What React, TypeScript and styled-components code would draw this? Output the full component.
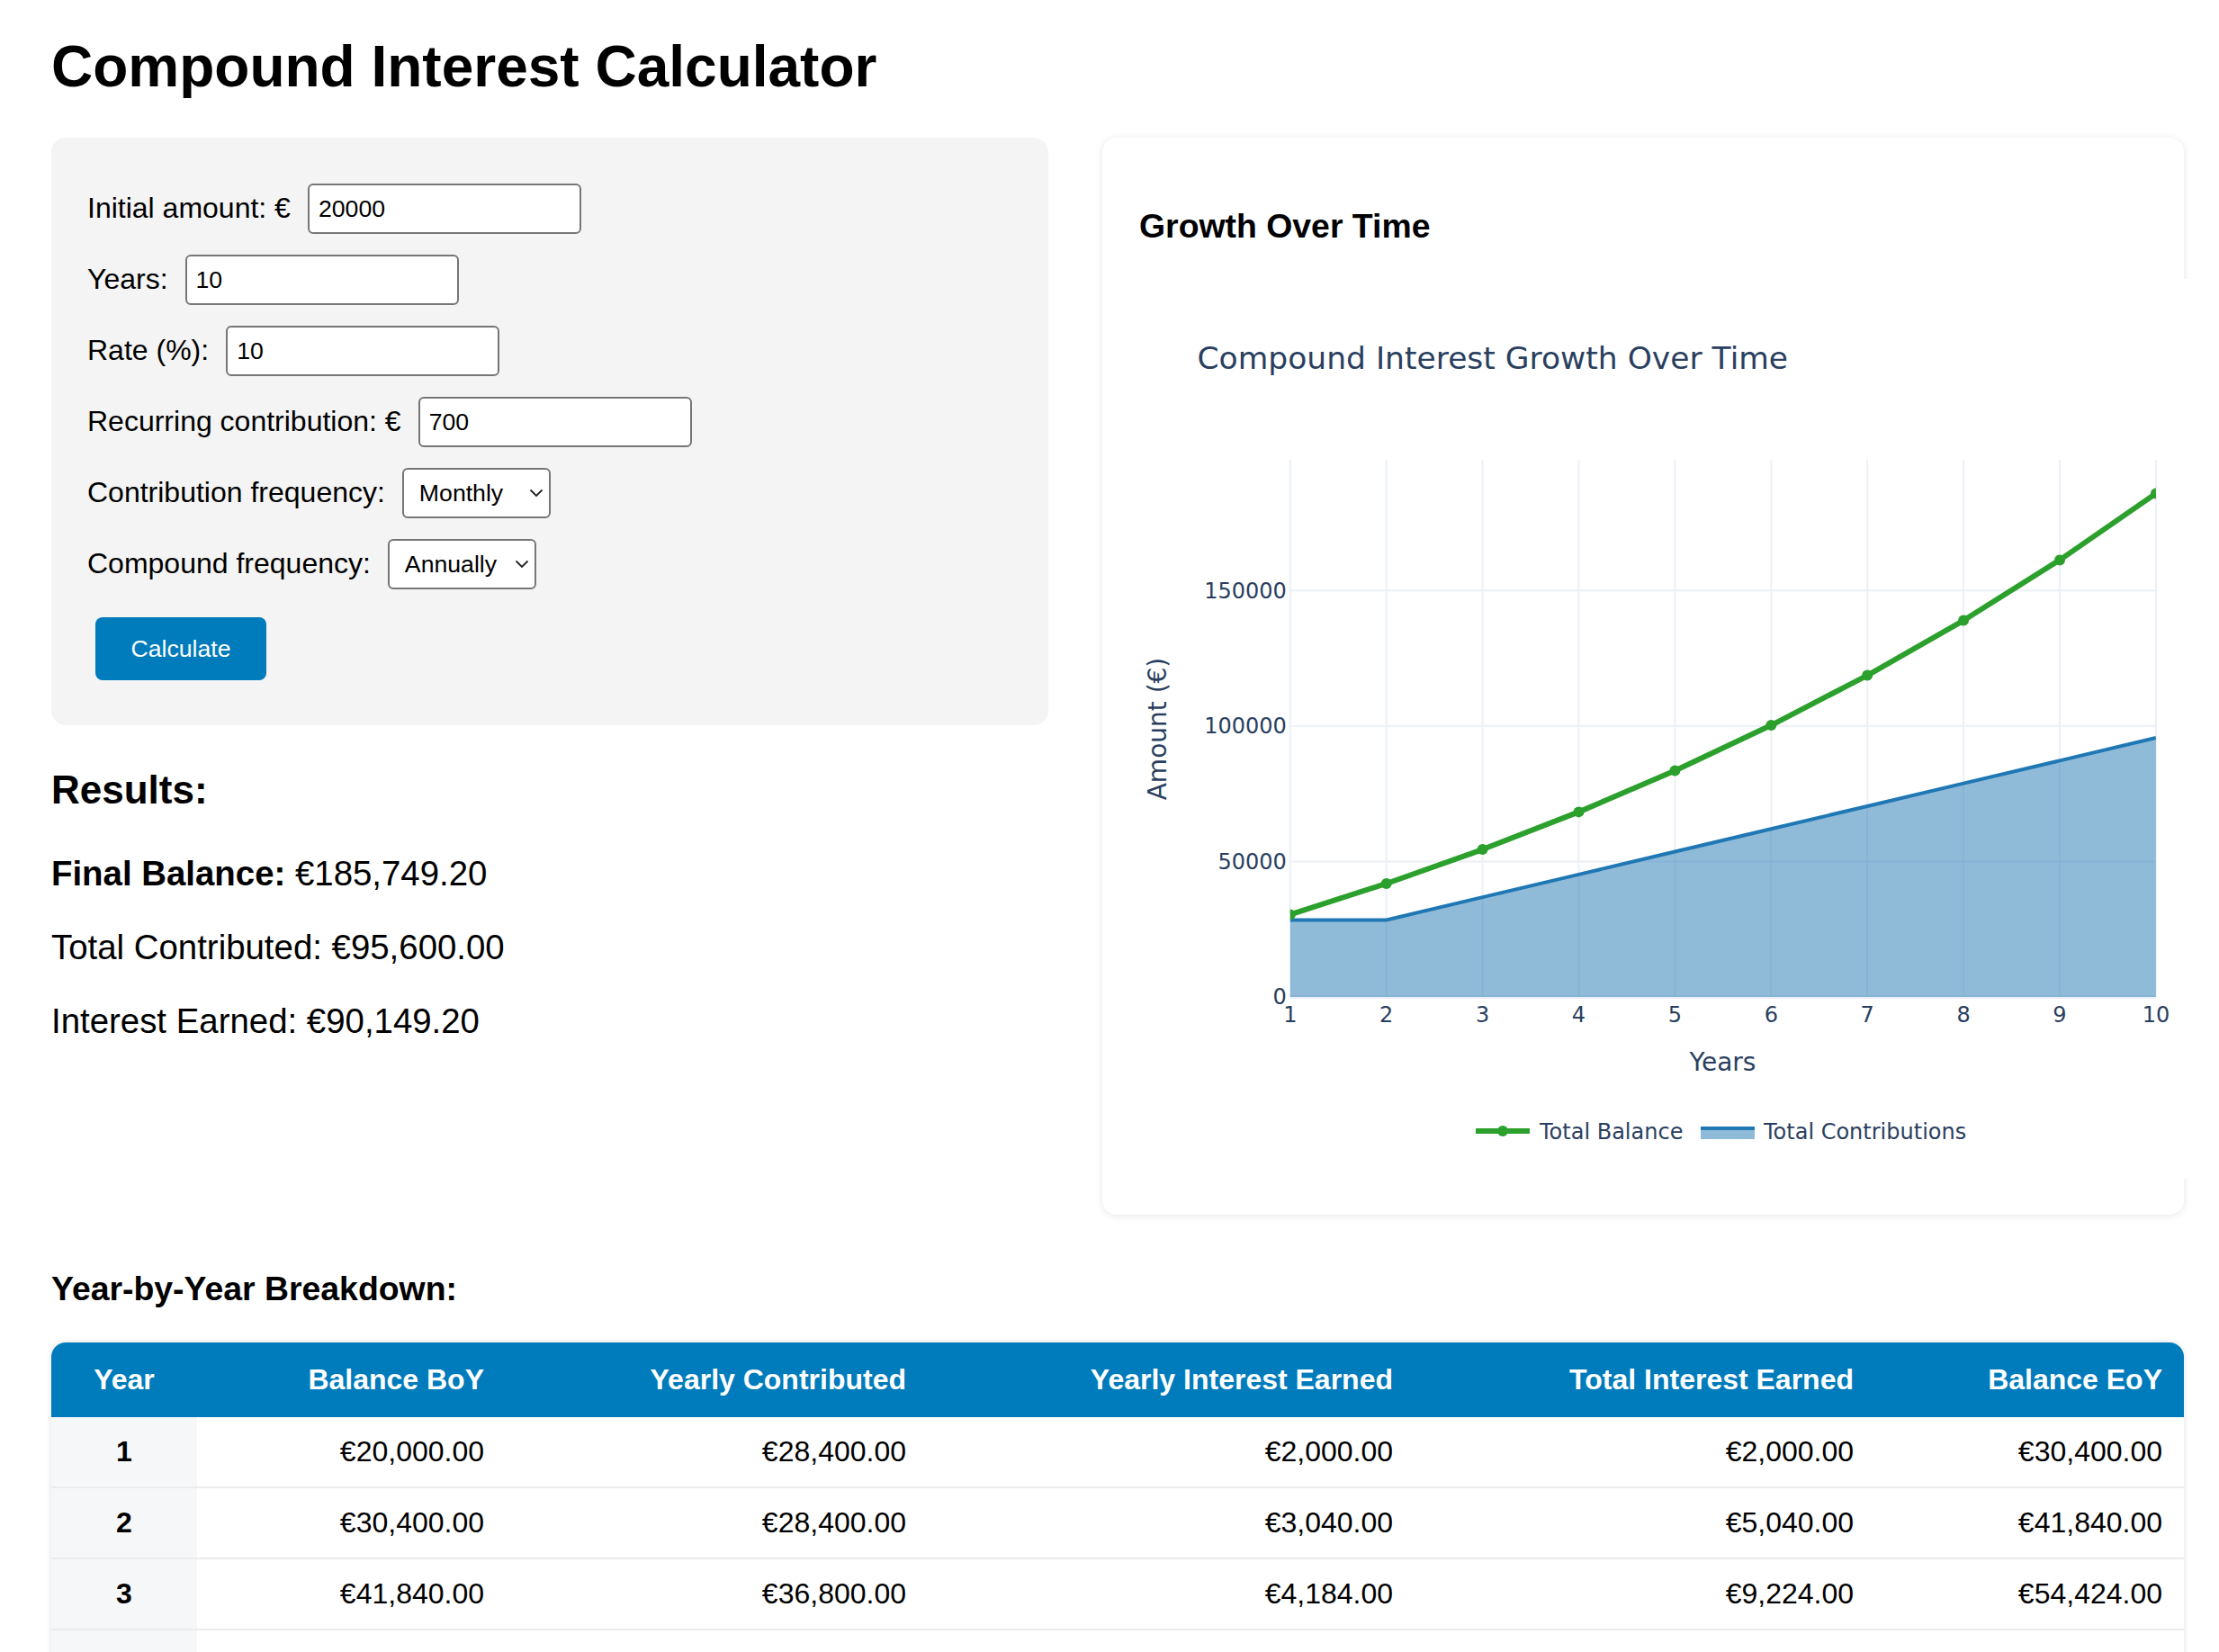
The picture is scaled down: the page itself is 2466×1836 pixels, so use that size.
import React from 'react';
import styled, { createGlobalStyle } from 'styled-components';

const GlobalStyle = createGlobalStyle`
  html { scrollbar-width: none; overflow-x: hidden; }
  html::-webkit-scrollbar { display: none; }
  * { box-sizing: border-box; }
  body {
    margin: 0;
    background: #fff;
    color: #000;
    font-family: "Liberation Sans", Arial, Helvetica, sans-serif;
    overflow-x: hidden;
  }
`;

const Page = styled.div`
  padding: 36px 0 60px 57px;
  width: 2427px;
`;

const Title = styled.h1`
  margin: 0 0 41px;
  font-size: 64px;
  line-height: 76px;
  font-weight: 700;
`;

const TopGrid = styled.div`
  display: grid;
  grid-template-columns: 1108px 1202px;
  column-gap: 60px;
  align-items: start;
`;

const LeftColumn = styled.div`
  display: flex;
  flex-direction: column;
`;

const FormPanel = styled.form`
  background: #f4f4f4;
  border-radius: 16px;
  padding: 51px 40px 50px;
  display: flex;
  flex-direction: column;
  gap: 23px;
`;

const FieldRow = styled.div`
  display: flex;
  align-items: center;
  gap: 19px;
  height: 56px;
`;

const FieldLabel = styled.label`
  font-size: 32px;
  line-height: 37px;
  white-space: nowrap;
  margin-top: -2px;
`;

const TextInput = styled.input`
  width: 304px;
  height: 56px;
  border: 2px solid #767676;
  border-radius: 6px;
  padding: 0 10px;
  font-family: inherit;
  font-size: 26.67px;
  color: #000;
  background: #fff;
  outline: none;
`;

const SelectWrap = styled.div`
  position: relative;
  width: 165px;
  height: 56px;
`;

const Select = styled.select`
  appearance: none;
  -webkit-appearance: none;
  width: 100%;
  height: 100%;
  border: 2px solid #767676;
  border-radius: 6px;
  padding: 0 0 0 17px;
  font-family: inherit;
  font-size: 26.67px;
  color: #000;
  background: #fff;
  outline: none;
`;

const Chevron = styled.svg`
  position: absolute;
  right: 8px;
  top: 50%;
  margin-top: -5px;
  width: 16px;
  height: 10px;
  pointer-events: none;
`;

const CalcButton = styled.button`
  align-self: flex-start;
  margin: 8px 0 0 9px;
  width: 190px;
  height: 70px;
  border: none;
  border-radius: 8px;
  background: #007bbb;
  color: #fff;
  font-family: inherit;
  font-size: 26.67px;
`;

const ResultsTitle = styled.h2`
  margin: 47px 0 0;
  font-size: 44px;
  line-height: 50px;
  font-weight: 700;
`;

const ResultList = styled.div`
  margin-top: 46px;
  display: flex;
  flex-direction: column;
  gap: 38px;
`;

const ResultLine = styled.p`
  margin: 0;
  font-size: 38.4px;
  line-height: 44px;
`;

const ChartCard = styled.section`
  background: #fff;
  border-radius: 16px;
  box-shadow: 0 1px 8px rgba(0, 0, 0, 0.1);
  padding: 40px 40px 40px 41px;
`;

const CardTitle = styled.h3`
  margin: 37px 0;
  font-size: 37.4px;
  line-height: 43px;
  font-weight: 700;
`;

const ChartFrame = styled.div`
  width: 1289px;
  height: 1000px;
  background: #fff;
`;

const ChartText = styled.text<{ $size: number }>`
  font-family: "DejaVu Sans", Verdana, sans-serif;
  fill: #2a3f5f;
  font-size: ${(p) => p.$size}px;
`;

const BreakdownTitle = styled.h3`
  margin: 61px 0 38px;
  font-size: 37.4px;
  line-height: 43px;
  font-weight: 700;
`;

const TableShell = styled.div`
  width: 2370px;
  border-radius: 16px;
  overflow: hidden;
  box-shadow: 0 0 6px rgba(0, 0, 0, 0.12);
`;

const Table = styled.table`
  width: 100%;
  border-collapse: separate;
  border-spacing: 0;
  table-layout: fixed;
  font-size: 32px;
`;

const HeadCell = styled.th<{ $center?: boolean }>`
  height: 83px;
  padding: 0 24px;
  background: #007bbb;
  color: #fff;
  font-weight: 700;
  text-align: ${(p) => (p.$center ? 'center' : 'right')};
  white-space: nowrap;
`;

const YearCell = styled.td`
  height: 79px;
  padding: 0;
  text-align: center;
  font-weight: 700;
  background: #f6f7f9;
  border-bottom: 2px solid #ececec;
`;

const ValueCell = styled.td`
  height: 79px;
  padding: 0 24px;
  text-align: right;
  border-bottom: 2px solid #ececec;
`;

/* ---------- data ---------- */

const contributions = [28400, 28400, 36800, 45200, 53600, 62000, 70400, 78800, 87200, 95600];

type Row = { year: number; boy: number; contributed: number; interest: number; totalInterest: number; eoy: number };

const buildRows = (): Row[] => {
  const rows: Row[] = [];
  let bal = 20000;
  let tot = 0;
  for (let i = 0; i < 10; i++) {
    const boy = bal;
    const interest = boy * 0.1;
    tot += interest;
    const eoy = boy + 8400 + interest;
    rows.push({ year: i + 1, boy, contributed: contributions[i], interest, totalInterest: tot, eoy });
    bal = eoy;
  }
  return rows;
};

const rows = buildRows();

const fmt = (v: number) =>
  '€' + v.toLocaleString('en-US', { minimumFractionDigits: 2, maximumFractionDigits: 2 });

/* ---------- chart ---------- */

const X0 = 167.8;
const DX = 106.9;
const Y0 = 798;
const TOP = 201;
const K = 150.6 / 50000;
const RIGHT = X0 + 9 * DX;

const xOf = (i: number) => X0 + i * DX;
const yOf = (v: number) => Y0 - v * K;

const GrowthChart: React.FC = () => {
  const balance = rows.map((r) => r.eoy);
  const balPts = balance.map((v, i) => `${xOf(i)},${yOf(v)}`).join(' ');
  const conPts = contributions.map((v, i) => `${xOf(i)},${yOf(v)}`).join(' ');
  const fillPath = `M${xOf(0)},${Y0} L${conPts.split(' ').join(' L')} L${xOf(9)},${Y0} Z`;
  const grid = '#ebf0f8';
  return (
    <svg width={1289} height={1000} viewBox="0 0 1289 1000">
      <defs>
        <clipPath id="plotClip">
          <rect x={X0} y={TOP} width={RIGHT - X0} height={Y0 - TOP} />
        </clipPath>
      </defs>
      <rect width={1289} height={1000} fill="#fff" />
      {contributions.map((_, i) => (
        <line key={'vx' + i} x1={xOf(i)} x2={xOf(i)} y1={TOP} y2={Y0} stroke={grid} strokeWidth={2} />
      ))}
      {[50000, 100000, 150000].map((v) => (
        <line key={'hy' + v} x1={X0} x2={RIGHT} y1={yOf(v)} y2={yOf(v)} stroke={grid} strokeWidth={2} />
      ))}
      <line x1={X0} x2={RIGHT} y1={Y0} y2={Y0} stroke={grid} strokeWidth={4} />
      <g clipPath="url(#plotClip)">
        <path d={fillPath} fill="rgba(31,119,180,0.5)" />
        <polyline points={conPts} fill="none" stroke="#1f77b4" strokeWidth={4} strokeLinejoin="round" />
        <polyline points={balPts} fill="none" stroke="#2ca02c" strokeWidth={6} strokeLinejoin="round" />
        {balance.map((v, i) => (
          <circle key={'m' + i} cx={xOf(i)} cy={yOf(v)} r={6} fill="#2ca02c" />
        ))}
      </g>
      {[0, 50000, 100000, 150000].map((v) => (
        <ChartText key={'yl' + v} $size={24} x={163.8} y={yOf(v) + 8.4} textAnchor="end">
          {v}
        </ChartText>
      ))}
      {contributions.map((_, i) => (
        <ChartText key={'xl' + i} $size={24} x={xOf(i)} y={825.5} textAnchor="middle">
          {i + 1}
        </ChartText>
      ))}
      <ChartText $size={34.5} x={64.5} y={100}>
        Compound Interest Growth Over Time
      </ChartText>
      <ChartText $size={28} x={648.5} y={880} textAnchor="middle">
        Years
      </ChartText>
      <ChartText $size={28} x={0} y={0} textAnchor="middle" transform="translate(29.5,500) rotate(-90)">
        Amount (€)
      </ChartText>
      <line x1={374} x2={434} y1={947} y2={947} stroke="#2ca02c" strokeWidth={6} />
      <circle cx={404} cy={947} r={6} fill="#2ca02c" />
      <ChartText $size={24} x={445} y={956.4}>
        Total Balance
      </ChartText>
      <rect x={624} y={944} width={60} height={12} fill="rgba(31,119,180,0.5)" />
      <line x1={624} x2={684} y1={944} y2={944} stroke="#1f77b4" strokeWidth={4} />
      <ChartText $size={24} x={694} y={956.4}>
        Total Contributions
      </ChartText>
    </svg>
  );
};

const ChevronIcon: React.FC = () => (
  <Chevron viewBox="0 0 16 10">
    <path d="M1.5 1.5 L8 8 L14.5 1.5" fill="none" stroke="#222" strokeWidth={1.8} />
  </Chevron>
);

const headers = ['Balance BoY', 'Yearly Contributed', 'Yearly Interest Earned', 'Total Interest Earned', 'Balance EoY'];
const colWidths = [162, 343, 469, 541, 512, 343];

export default function App() {
  return (
    <>
      <GlobalStyle />
      <Page>
        <Title>Compound Interest Calculator</Title>
        <TopGrid>
          <LeftColumn>
            <FormPanel onSubmit={(e) => e.preventDefault()}>
              <FieldRow>
                <FieldLabel>Initial amount: €</FieldLabel>
                <TextInput type="text" defaultValue="20000" />
              </FieldRow>
              <FieldRow>
                <FieldLabel>Years:</FieldLabel>
                <TextInput type="text" defaultValue="10" />
              </FieldRow>
              <FieldRow>
                <FieldLabel>Rate (%):</FieldLabel>
                <TextInput type="text" defaultValue="10" />
              </FieldRow>
              <FieldRow>
                <FieldLabel>Recurring contribution: €</FieldLabel>
                <TextInput type="text" defaultValue="700" />
              </FieldRow>
              <FieldRow>
                <FieldLabel>Contribution frequency:</FieldLabel>
                <SelectWrap>
                  <Select defaultValue="monthly">
                    <option value="monthly">Monthly</option>
                    <option value="quarterly">Quarterly</option>
                    <option value="annually">Annually</option>
                  </Select>
                  <ChevronIcon />
                </SelectWrap>
              </FieldRow>
              <FieldRow>
                <FieldLabel>Compound frequency:</FieldLabel>
                <SelectWrap>
                  <Select defaultValue="annually">
                    <option value="monthly">Monthly</option>
                    <option value="quarterly">Quarterly</option>
                    <option value="annually">Annually</option>
                  </Select>
                  <ChevronIcon />
                </SelectWrap>
              </FieldRow>
              <CalcButton type="submit">Calculate</CalcButton>
            </FormPanel>
            <ResultsTitle>Results:</ResultsTitle>
            <ResultList>
              <ResultLine>
                <strong>Final Balance:</strong> €185,749.20
              </ResultLine>
              <ResultLine>Total Contributed: €95,600.00</ResultLine>
              <ResultLine>Interest Earned: €90,149.20</ResultLine>
            </ResultList>
          </LeftColumn>
          <ChartCard>
            <CardTitle>Growth Over Time</CardTitle>
            <ChartFrame>
              <GrowthChart />
            </ChartFrame>
          </ChartCard>
        </TopGrid>
        <BreakdownTitle>Year-by-Year Breakdown:</BreakdownTitle>
        <TableShell>
          <Table>
            <colgroup>
              {colWidths.map((w, i) => (
                <col key={i} style={{ width: w }} />
              ))}
            </colgroup>
            <thead>
              <tr>
                <HeadCell $center>Year</HeadCell>
                {headers.map((h) => (
                  <HeadCell key={h}>{h}</HeadCell>
                ))}
              </tr>
            </thead>
            <tbody>
              {rows.map((r) => (
                <tr key={r.year}>
                  <YearCell>{r.year}</YearCell>
                  <ValueCell>{fmt(r.boy)}</ValueCell>
                  <ValueCell>{fmt(r.contributed)}</ValueCell>
                  <ValueCell>{fmt(r.interest)}</ValueCell>
                  <ValueCell>{fmt(r.totalInterest)}</ValueCell>
                  <ValueCell>{fmt(r.eoy)}</ValueCell>
                </tr>
              ))}
            </tbody>
          </Table>
        </TableShell>
      </Page>
    </>
  );
}
